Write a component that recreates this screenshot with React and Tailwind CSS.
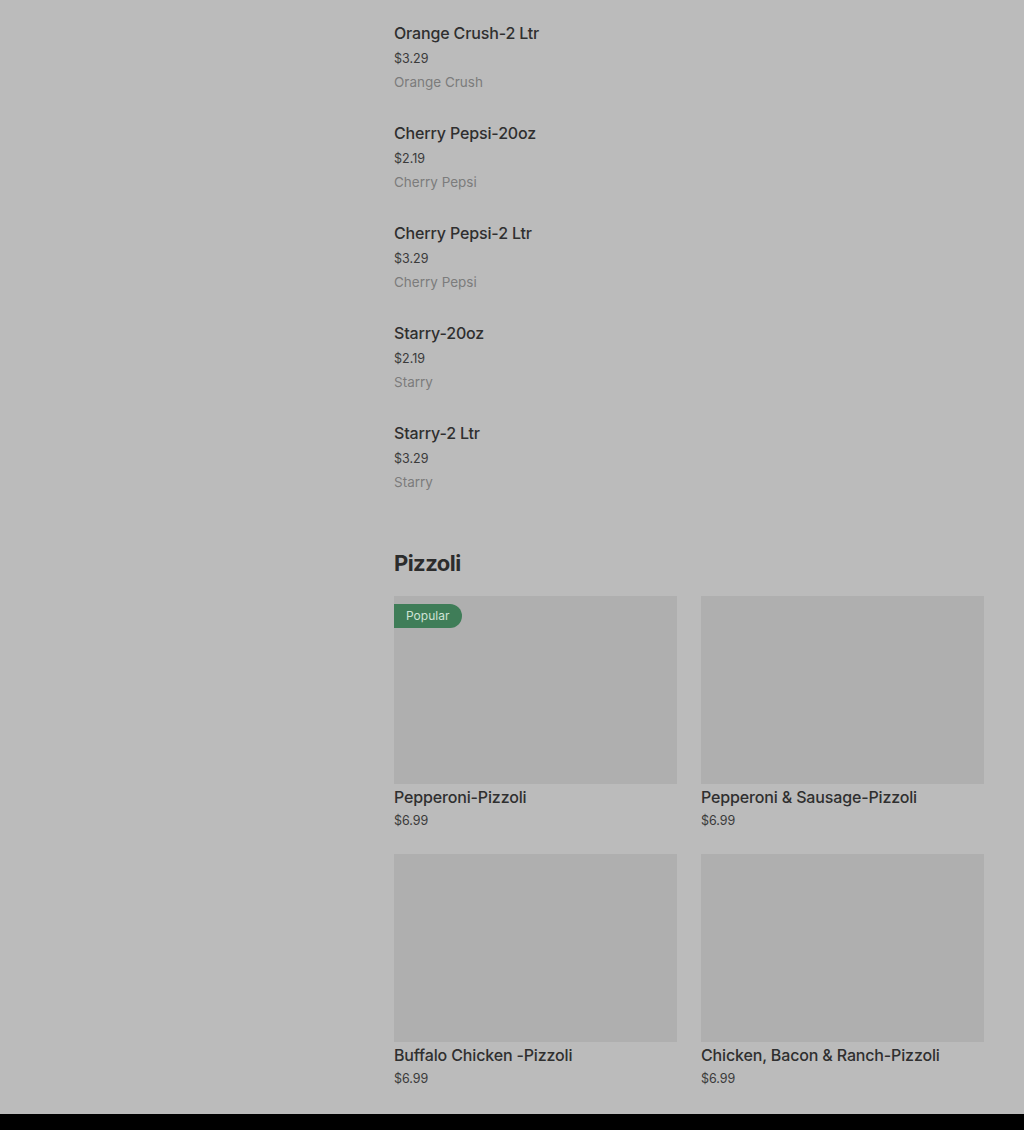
const drinks = [
  { name: "Orange Crush-2 Ltr", price: "$3.29", desc: "Orange Crush" },
  { name: "Cherry Pepsi-20oz", price: "$2.19", desc: "Cherry Pepsi" },
  { name: "Cherry Pepsi-2 Ltr", price: "$3.29", desc: "Cherry Pepsi" },
  { name: "Starry-20oz", price: "$2.19", desc: "Starry" },
  { name: "Starry-2 Ltr", price: "$3.29", desc: "Starry" },
];

const pizzoli = [
  { name: "Pepperoni-Pizzoli", price: "$6.99", popular: true },
  { name: "Pepperoni & Sausage-Pizzoli", price: "$6.99" },
  { name: "Buffalo Chicken -Pizzoli", price: "$6.99" },
  { name: "Chicken, Bacon & Ranch-Pizzoli", price: "$6.99" },
];

function ListItem({ item }) {
  return (
    <div className="h-[100px] flex flex-col">
      <div className="text-[16px] leading-5 font-medium tracking-[-0.15px] text-[#2f2f2f]">{item.name}</div>
      <div className="mt-[6px] text-[12.5px] leading-5 text-[#3a3a3a]">{item.price}</div>
      <div className="mt-[3px] text-[13.5px] leading-5 text-[#7c7c7c]">{item.desc}</div>
    </div>
  );
}

function Card({ item }) {
  return (
    <div className="flex flex-col">
      <div className="relative h-[188px] bg-[#afafaf]">
        {item.popular && (
          <span className="absolute left-0 top-2 h-6 pl-3 pr-[13px] flex items-center rounded-r-full bg-[#3f7d58] text-[12px] text-[#cfe3d6]">
            Popular
          </span>
        )}
      </div>
      <div className="mt-[3px] text-[16px] leading-5 font-medium tracking-[-0.15px] text-[#2f2f2f]">{item.name}</div>
      <div className="mt-[4px] text-[12.5px] leading-5 text-[#3a3a3a]">{item.price}</div>
    </div>
  );
}

export default function App() {
  return (
    <div
      className="min-h-[1130px] bg-[#bbbbbb] flex flex-col"
      style={{ fontFamily: "Inter, 'Noto Sans', sans-serif" }}
    >
      <div className="flex-1 pl-[394px] pr-[40px] pt-[23px]">
        {drinks.map((d) => (
          <ListItem key={d.name} item={d} />
        ))}
        <h2 className="mt-[22px] text-[22px] leading-9 font-bold tracking-tight text-[#2c2c2c]">Pizzoli</h2>
        <div className="mt-[15px] grid grid-cols-2 gap-x-6 gap-y-[23px]">
          {pizzoli.map((p) => (
            <Card key={p.name} item={p} />
          ))}
        </div>
      </div>
      <div className="h-4 bg-black mt-[10px]" />
    </div>
  );
}
